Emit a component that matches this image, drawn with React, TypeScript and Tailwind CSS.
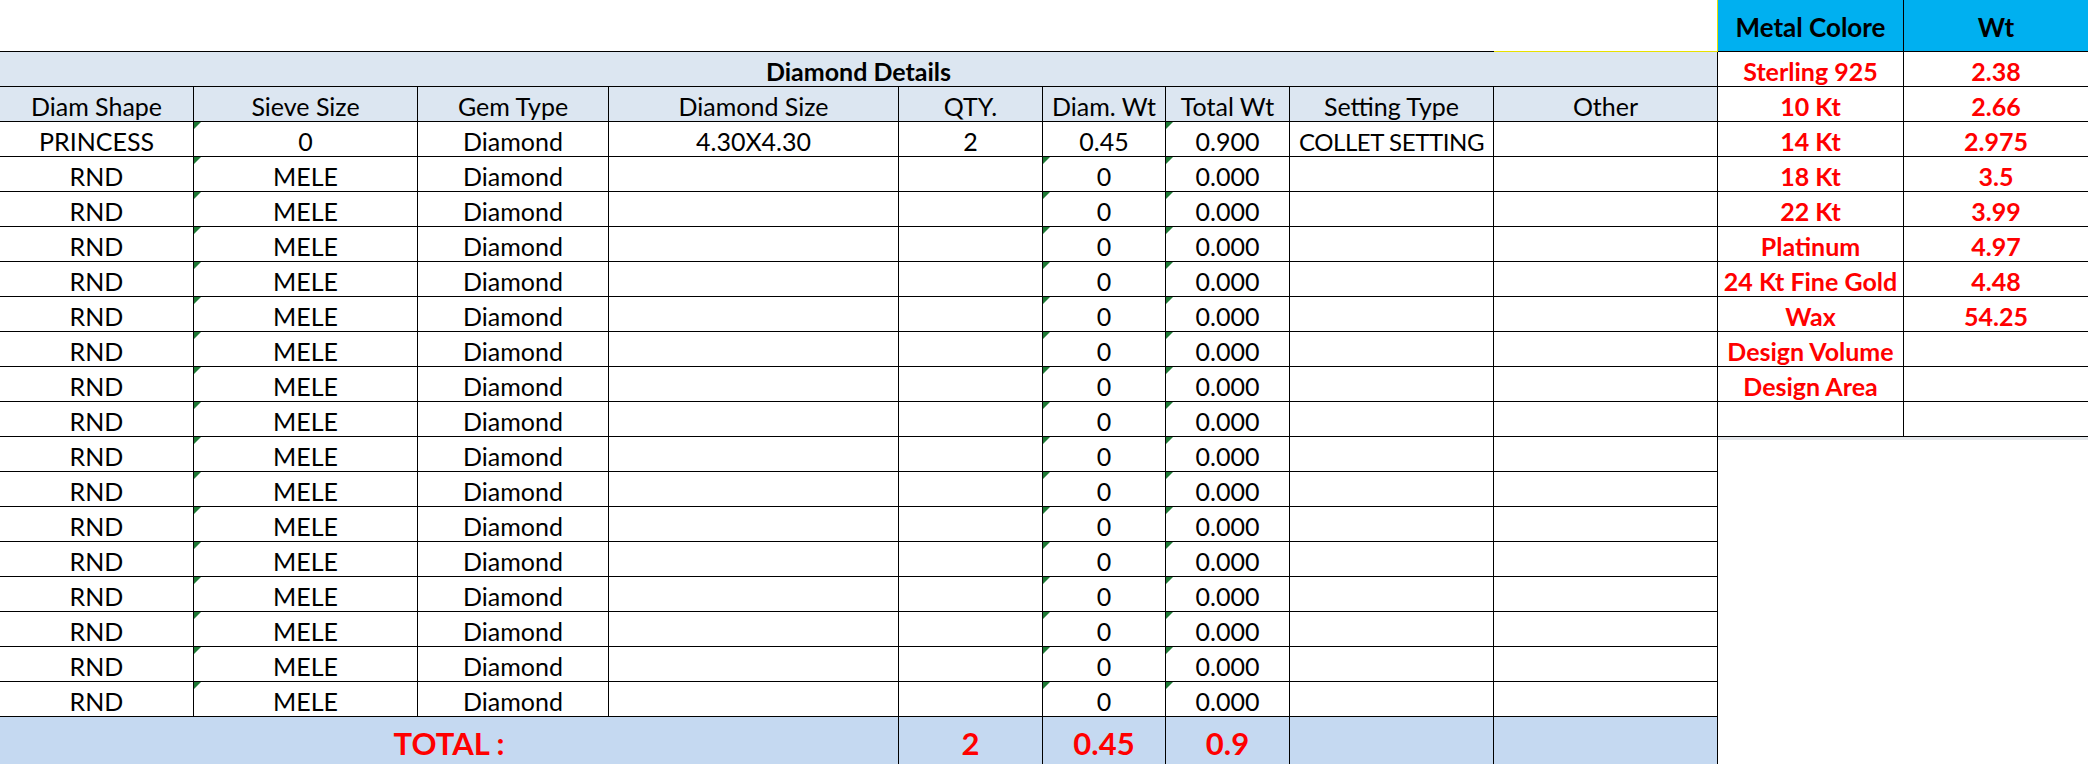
import React from "react";

type Row = {
  shape: string;
  sieve: string;
  gem: string;
  size: string;
  qty: string;
  dwt: string;
  twt: string;
  setting: string;
  other: string;
};

const rows: Row[] = [
  {
    shape: "PRINCESS",
    sieve: "0",
    gem: "Diamond",
    size: "4.30X4.30",
    qty: "2",
    dwt: "0.45",
    twt: "0.900",
    setting: "COLLET SETTING",
    other: "",
  },
  ...Array.from({ length: 16 }, () => ({
    shape: "RND",
    sieve: "MELE",
    gem: "Diamond",
    size: "",
    qty: "",
    dwt: "0",
    twt: "0.000",
    setting: "",
    other: "",
  })),
];

const metals: [string, string][] = [
  ["Sterling 925", "2.38"],
  ["10 Kt", "2.66"],
  ["14 Kt", "2.975"],
  ["18 Kt", "3.5"],
  ["22 Kt", "3.99"],
  ["Platinum", "4.97"],
  ["24 Kt Fine Gold", "4.48"],
  ["Wax", "54.25"],
  ["Design Volume", ""],
  ["Design Area", ""],
  ["", ""],
];

const headers = [
  "Diam Shape",
  "Sieve Size",
  "Gem Type",
  "Diamond Size",
  "QTY.",
  "Diam. Wt",
  "Total Wt",
  "Setting Type",
  "Other",
];

const gridCols =
  "grid grid-cols-[194px_224px_191px_290px_144px_123px_124px_204px_224px]";

const cell =
  "relative h-[35px] pt-[5px] border-r border-b border-black flex items-center justify-center whitespace-nowrap overflow-hidden";

// little green "number stored as text" flag in the corner
const Flag = () => (
  <span className="absolute left-0 top-0 w-0 h-0 border-t-[7px] border-r-[7px] border-t-[#1e7a35] border-r-transparent" />
);

const App = () => {
  return (
    <div className="w-[2088px] h-[764px] overflow-hidden bg-white text-black font-['Lato','Liberation_Sans',sans-serif] text-[25px] leading-none">
      <div className="flex">
        {/* left: diamond details */}
        <div className="w-[1718px]">
          <div className="flex h-[52px]">
            <div className="w-[1494px] border-b border-black"></div>
            <div className="w-[224px] border-b border-r border-[#e8e000]"></div>
          </div>

          <div className={gridCols}>
            <div className="col-span-9 h-[35px] pt-[4px] border-r border-b border-black bg-[#dce6f1] flex items-center justify-center font-bold">
              Diamond Details
            </div>
            {headers.map((h) => (
              <div key={h} className={cell + " bg-[#dce6f1]"}>
                {h}
              </div>
            ))}

            {rows.map((r, i) => (
              <React.Fragment key={i}>
                <div className={cell}>{r.shape}</div>
                <div className={cell}>
                  <Flag />
                  {r.sieve}
                </div>
                <div className={cell}>{r.gem}</div>
                <div className={cell}>{r.size}</div>
                <div className={cell}>{r.qty}</div>
                <div className={cell}>
                  {i > 0 && <Flag />}
                  {r.dwt}
                </div>
                <div className={cell}>
                  <Flag />
                  {r.twt}
                </div>
                <div className={cell + " text-[24px] tracking-[-0.4px]"}>
                  {r.setting}
                </div>
                <div className={cell}>{r.other}</div>
              </React.Fragment>
            ))}

            <div className="col-span-4 h-[52px] border-r border-black bg-[#c5d9f1] flex items-center justify-center font-bold text-[31px] text-[#ff0000]">
              TOTAL :
            </div>
            <div className="h-[52px] border-r border-black bg-[#c5d9f1] flex items-center justify-center font-bold text-[31px] text-[#ff0000]">
              2
            </div>
            <div className="h-[52px] border-r border-black bg-[#c5d9f1] flex items-center justify-center font-bold text-[31px] text-[#ff0000]">
              0.45
            </div>
            <div className="h-[52px] border-r border-black bg-[#c5d9f1] flex items-center justify-center font-bold text-[31px] text-[#ff0000]">
              0.9
            </div>
            <div className="h-[52px] border-r border-black bg-[#c5d9f1]"></div>
            <div className="h-[52px] border-r border-black bg-[#c5d9f1]"></div>
          </div>
        </div>

        {/* right: metal weights */}
        <div className="w-[370px]">
          <div className="grid grid-cols-[186px_184px]">
            <div className="h-[52px] pt-[3px] bg-[#00b0f0] border-r border-b border-black flex items-center justify-center font-bold text-[26px]">
              Metal Colore
            </div>
            <div className="h-[52px] pt-[3px] bg-[#00b0f0] border-b border-black flex items-center justify-center font-bold text-[26px]">
              Wt
            </div>
            {metals.map(([name, wt], i) => (
              <React.Fragment key={i}>
                <div className={cell + " font-bold text-[#ff0000]"}>{name}</div>
                <div className="h-[35px] pt-[5px] border-b border-black flex items-center justify-center font-bold text-[#ff0000]">
                  {wt}
                </div>
              </React.Fragment>
            ))}
          </div>
          <div className="h-[3px] border-t-[3px] border-[#e4e7eb]"></div>
        </div>
      </div>
    </div>
  );
};

export default App;
